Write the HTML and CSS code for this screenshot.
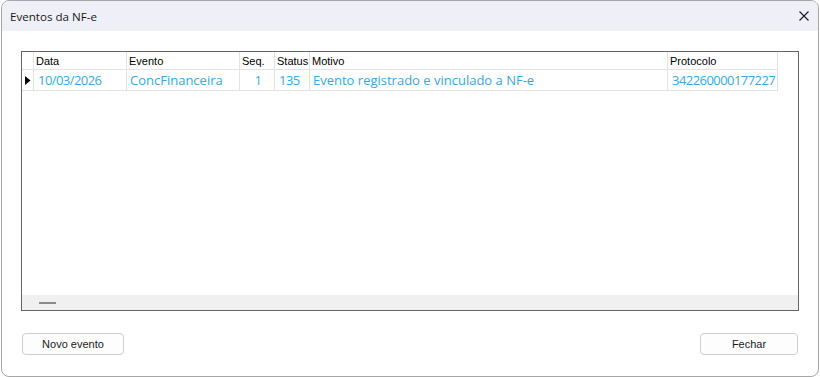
FILE: index.html
```html
<!DOCTYPE html>
<html lang="pt">
<head>
<meta charset="utf-8">
<title>Eventos da NF-e</title>
<link rel="stylesheet" href="styles.css">
</head>
<body>
<div class="window">
  <div class="titlebar">
    <span class="title">Eventos da NF-e</span>
    <svg class="close" width="10" height="10" viewBox="0 0 10 10"><path d="M0.5 0.5 L9.5 9.5 M9.5 0.5 L0.5 9.5" stroke="#1a1a1a" stroke-width="1.1" fill="none"/></svg>
  </div>
  <div class="content">
    <div class="grid">
      <div class="grid-body">
        <table class="table">
          <thead>
            <tr>
              <th class="c-rh"></th>
              <th class="c-data">Data</th>
              <th class="c-evento">Evento</th>
              <th class="c-seq">Seq.</th>
              <th class="c-status">Status</th>
              <th class="c-motivo">Motivo</th>
              <th class="c-prot">Protocolo</th>
            </tr>
          </thead>
          <tbody>
            <tr>
              <td class="c-rh"><svg class="marker" width="6" height="9" viewBox="0 0 6 9"><polygon points="0,0 5.5,4.5 0,9" fill="#000"/></svg></td>
              <td class="num">10/03/2026</td>
              <td>ConcFinanceira</td>
              <td class="num center">1</td>
              <td class="num">135</td>
              <td>Evento registrado e vinculado a NF-e</td>
              <td class="num">342260000177227</td>
            </tr>
          </tbody>
        </table>
      </div>
      <div class="hscroll"><span class="dash"></span></div>
    </div>
    <div class="buttons">
      <button class="btn btn-novo">Novo evento</button>
      <button class="btn btn-fechar">Fechar</button>
    </div>
  </div>
</div>
</body>
</html>
```
FILE: styles.css
```css
html, body {
  margin: 0;
  padding: 0;
  background: #ffffff;
}
body {
  width: 820px;
  height: 377px;
  overflow: hidden;
}
.window {
  box-sizing: border-box;
  margin-left: 1px;
  width: 818px;
  height: 377px;
  border: 1px solid #a6a6a6;
  border-radius: 8px;
  background: #ffffff;
  overflow: hidden;
  display: flex;
  flex-direction: column;
}
.titlebar {
  height: 30px;
  flex: none;
  background: #eff0f7;
  display: flex;
  align-items: center;
  justify-content: space-between;
  padding: 0 9px 0 8px;
}
.title {
  font-family: "Open Sans", "Noto Sans", sans-serif;
  font-size: 11.6px;
  color: #1a1a1a;
  padding-top: 1px;
}
.close {
  display: block;
}
.content {
  flex: 1;
  display: flex;
  flex-direction: column;
  padding: 20px 20px 0 19px;
}
.grid {
  box-sizing: border-box;
  width: 778px;
  height: 260px;
  border: 1px solid #646464;
  display: flex;
  flex-direction: column;
}
.grid-body {
  flex: 1;
  background: #ffffff;
}
.table {
  border-collapse: separate;
  border-spacing: 0;
  table-layout: fixed;
  width: 756px;
}
.table th,
.table td {
  box-sizing: border-box;
  border-right: 1px solid #e3e3e3;
  border-bottom: 1px solid #e3e3e3;
  padding: 0;
  white-space: nowrap;
  overflow: hidden;
}
.table th {
  height: 18px;
  font-family: "Liberation Sans", Arial, sans-serif;
  font-size: 11px;
  font-weight: normal;
  color: #000000;
  text-align: left;
  padding: 1px 0 0 2px;
  line-height: 16px;
}
.table td {
  height: 21px;
  font-family: "Open Sans", "Noto Sans", sans-serif;
  font-size: 13px;
  color: #34a9ea;
  padding: 0 0 0 3px;
  line-height: 20px;
}
.table td.num {
  letter-spacing: -0.55px;
  padding-left: 4px;
}
.table td.center {
  text-align: center;
  padding: 0 0 0 2px;
}
.c-rh { width: 12px; }
.c-data { width: 93px; }
.c-evento { width: 113px; }
.c-seq { width: 35px; }
.c-status { width: 35px; }
.c-motivo { width: 358px; }
.c-prot { width: 110px; }
.table td.c-rh {
  padding: 0 0 0 3px;
  vertical-align: middle;
}
.marker {
  display: block;
  margin-top: 1px;
}
.hscroll {
  height: 15px;
  flex: none;
  background: #f0f0f0;
  display: flex;
  align-items: center;
  padding-left: 17px;
}
.dash {
  display: block;
  width: 17px;
  height: 2px;
  background: #8c8c8c;
  margin-top: 1px;
}
.buttons {
  display: flex;
  justify-content: space-between;
  margin-top: 22px;
  padding-left: 1px;
}
.btn {
  box-sizing: border-box;
  height: 22px;
  border: 1px solid #d0d0d0;
  border-radius: 4px;
  background: #fdfdfd;
  font-family: "Liberation Sans", Arial, sans-serif;
  font-size: 11px;
  color: #1a1a1a;
  padding: 0;
  line-height: 20px;
}
.btn-novo { width: 102px; }
.btn-fechar { width: 98px; }
```
